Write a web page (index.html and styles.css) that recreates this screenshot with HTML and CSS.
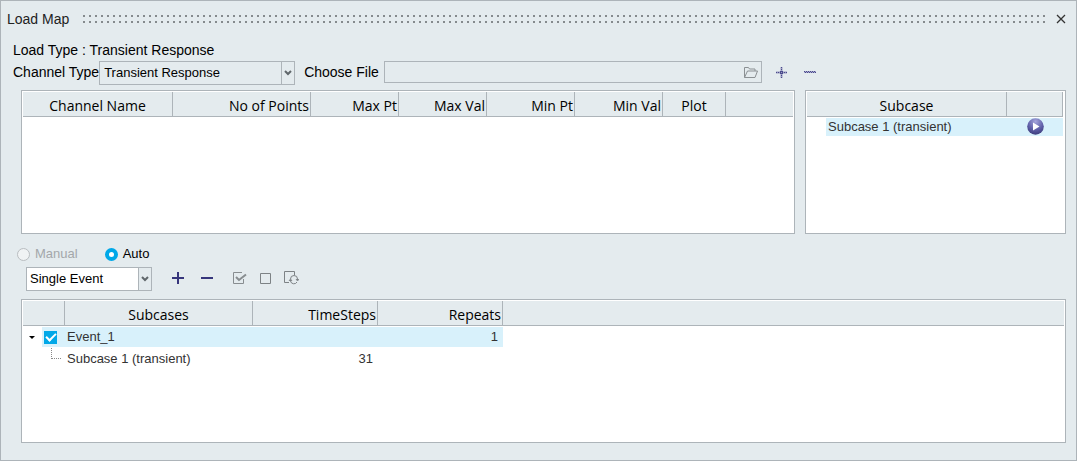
FILE: index.html
```
<!DOCTYPE html>
<html lang="en">
<head>
  <meta charset="UTF-8">
  <meta name="viewport" content="width=device-width, initial-scale=1.0">
  <title>Load Map</title>
  <link rel="stylesheet" href="styles.css">
</head>
<body>
  <main class="panel">
    <header class="title-bar">
      <h1>Load Map</h1>
      <div class="grip"></div>
      <button class="icon-btn close" type="button" aria-label="Close">
        <svg width="10" height="10" viewBox="0 0 10 10"><path d="M1 1l8 8M9 1l-8 8" stroke="#333" stroke-width="1.3"/></svg>
      </button>
    </header>

    <p class="load-type">Load Type : Transient Response</p>

    <div class="channel-row">
      <label for="channel-type">Channel Type</label>
      <span class="select channel-select">
        <select id="channel-type">
          <option>Transient Response</option>
        </select>
        <svg class="arrow" viewBox="0 0 12 22"><path d="M3 9l3 3 3-3" fill="none" stroke="#60676b" stroke-width="2"/></svg>
      </span>
      <label class="file-label" for="file">Choose File</label>
      <span class="file-box">
        <input id="file" type="text">
        <button class="icon-btn" type="button" aria-label="Browse">
          <svg width="14" height="11" viewBox="0 0 14 11" fill="none" stroke="#8b9093"><path d="M.5 10.500V.5h4l1 1.500h5.500v2M.5 10.500l3-6.500h10l-2.500 6.500z"/></svg>
        </button>
      </span>
      <button class="icon-btn add-file" type="button" aria-label="Add channel">
        <svg width="11" height="11" viewBox="0 0 11 11" stroke="#4a4a8c" fill="none"><path d="M0 5.500h11M5.500 0v11" stroke="#9a9cc0" stroke-width="2"/><path d="M0 5.500h11M5.500 0v11" stroke-dasharray="1 1"/><path d="M4 4.500h3M4 6.500h3" stroke-dasharray="1 1"/></svg>
      </button>
      <button class="icon-btn remove-file" type="button" aria-label="Remove channel">
        <svg width="12" height="2" viewBox="0 0 12 2" stroke="#4a4a8c"><path d="M0 1h12" stroke="#a9abce" stroke-width="2"/><path d="M0 .5h12" stroke-dasharray="1 1"/><path d="M1 1.500h11" stroke-dasharray="1 1"/></svg>
      </button>
    </div>

    <div class="tables">
      <div class="table-box">
        <table>
          <colgroup><col class="col-name"><col class="col-points"><col class="col-value"><col class="col-value"><col class="col-value"><col class="col-value"><col class="col-plot"><col></colgroup>
          <thead>
            <tr><th>Channel Name</th><th class="num">No of Points</th><th class="num">Max Pt</th><th class="num">Max Val</th><th class="num">Min Pt</th><th class="num">Min Val</th><th>Plot</th><th></th></tr>
          </thead>
        </table>
      </div>
      <div class="table-box subcase-box">
        <table>
          <colgroup><col><col class="col-run"></colgroup>
          <thead>
            <tr><th>Subcase</th><th></th></tr>
          </thead>
          <tbody>
            <tr>
              <td class="subcase-name"><span>Subcase 1 (transient)</span></td>
              <td class="run">
                <button class="icon-btn" type="button" aria-label="Run subcase">
                  <svg width="17" height="17" viewBox="0 0 17 17">
                    <defs><radialGradient id="ball" cx=".5" cy=".2" r=".8"><stop offset="0" stop-color="#a5a5dc"/><stop offset=".6" stop-color="#5f5fa8"/><stop offset="1" stop-color="#3c3c7c"/></radialGradient></defs>
                    <circle cx="8.500" cy="8.500" r="8.300" fill="url(#ball)"/><path d="M6 4.500l6.500 4-6.500 4z" fill="#fff"/>
                  </svg>
                </button>
              </td>
            </tr>
          </tbody>
        </table>
      </div>
    </div>

    <div class="modes">
      <label class="off"><input type="radio" name="mode" disabled>Manual</label>
      <label><input type="radio" name="mode" checked>Auto</label>
    </div>

    <div class="event-row">
      <span class="select event-select">
        <select aria-label="Event type">
          <option>Single Event</option>
        </select>
        <svg class="arrow" viewBox="0 0 12 22"><path d="M3 9l3 3 3-3" fill="none" stroke="#60676b" stroke-width="2"/></svg>
      </span>
      <div class="tools">
        <button class="icon-btn" type="button" aria-label="Add event">
          <svg width="12" height="12" viewBox="0 0 12 12"><path d="M0 6h12M6 0v12" stroke="#36367c" stroke-width="2"/></svg>
        </button>
        <button class="icon-btn" type="button" aria-label="Remove event">
          <svg width="12" height="12" viewBox="0 0 12 12"><path d="M0 6h12" stroke="#36367c" stroke-width="2"/></svg>
        </button>
      </div>
      <div class="tools checks">
        <button class="icon-btn" type="button" aria-label="Check all">
          <svg width="14" height="12" viewBox="0 0 14 12" fill="none" stroke="#888d90"><path d="M9 .5H.5v11h10V7"/><path d="M3 5l3 3 7-5.500" stroke-width="2"/></svg>
        </button>
        <button class="icon-btn" type="button" aria-label="Uncheck all">
          <svg width="11" height="11" viewBox="0 0 11 11" fill="none" stroke="#7d8285"><path d="M.5.5h10v10H.5z"/></svg>
        </button>
        <button class="icon-btn" type="button" aria-label="Reverse checks">
          <svg width="15" height="14" viewBox="0 0 15 14" fill="none" stroke="#7d8285"><path d="M5 11.500H.5V.5h10V4"/><path d="M6.500 8a3.500 3.500 0 0 1 7 0v1M13 11a3.500 3.500 0 0 1-6.500-1V9M5 10l1.500-2L8 10M12 8l1.500 2L15 8"/></svg>
        </button>
      </div>
    </div>

    <div class="table-box events-box">
      <table>
        <colgroup><col class="col-tree"><col class="col-subcases"><col class="col-steps"><col class="col-steps"><col></colgroup>
        <thead>
          <tr><th></th><th>Subcases</th><th class="num">TimeSteps</th><th class="num">Repeats</th><th></th></tr>
        </thead>
        <tbody>
          <tr class="event">
            <td class="tree">
              <div class="node">
                <button class="icon-btn" type="button" aria-label="Collapse Event_1">
                  <svg width="6" height="3" viewBox="0 0 6 3"><path d="M0 0h6L3 3z"/></svg>
                </button>
                <input id="event-1" type="checkbox" checked>
              </div>
            </td>
            <td><label for="event-1">Event_1</label></td><td></td><td class="num">1</td><td class="rest"></td>
          </tr>
          <tr class="child">
            <td class="tree"><div class="branch"></div></td>
            <td>Subcase 1 (transient)</td><td class="num">31</td><td></td><td></td>
          </tr>
        </tbody>
      </table>
    </div>
  </main>
</body>
</html>
```
FILE: styles.css
```
* {
  box-sizing: border-box;
}
body {
  margin: 0;
  font-family: "Liberation Sans", Arial, sans-serif;
  font-size: 13px;
  line-height: 16px;
  color: #000;
}
.panel {
  min-height: 100vh;
  display: flex;
  flex-direction: column;
  padding: 10px 10px 17px 6px;
  background: #e4ebee;
  border: 1px solid #adb4b9;
}
.icon-btn {
  display: flex;
  padding: 0;
  border: 0;
  background: none;
}
.title-bar {
  display: flex;
  align-items: center;
  height: 16px;
}
h1 {
  margin: 0;
  font-size: 14px;
  font-weight: normal;
  color: #222;
}
/* two rows of small square dots */
.grip {
  flex: 1;
  height: 8px;
  margin: 0 11px 0 14px;
  background:
    conic-gradient(from 270deg at 2px 2px, #858a8d 90deg, transparent 0) 0 0 / 6px 6px;
}
.load-type {
  margin: 15px 0 3px 6px;
  font-size: 14px;
}
.channel-row {
  display: flex;
  align-items: flex-start;
  height: 22px;
  padding-left: 6px;
}
.channel-row label {
  font-size: 14px;
  line-height: 22px;
}
.select {
  position: relative;
  display: flex;
  height: 24px;
}
.select select {
  width: 100%;
  padding: 0 16px 0 4px;
  appearance: none;
  border: 1px solid #adb4b9;
  border-radius: 0;
  background: #e4ebee;
  font: inherit;
  color: inherit;
}
.arrow {
  position: absolute;
  top: 1px;
  right: 1px;
  bottom: 1px;
  width: 13px;
  height: 22px;
  border-left: 1px solid #adb4b9;
  pointer-events: none;
}
.channel-select {
  width: 196px;
}
.file-label {
  margin: 0 5px 0 9px;
}
.file-box {
  display: flex;
  align-items: center;
  width: 378px;
  height: 22px;
  padding-right: 3px;
  border: 1px solid #adb4b9;
}
.file-box input {
  flex: 1;
  min-width: 0;
  height: 20px;
  border: 0;
  background: none;
  font: inherit;
}
.add-file,
.remove-file {
  align-self: center;
}
.add-file {
  margin-left: 14px;
}
.remove-file {
  margin-left: 17px;
}
.tables {
  display: flex;
  gap: 10px;
  margin: 7px 0 12px 14px;
}
.table-box {
  flex: 1;
  min-width: 0;
  height: 144px;
  padding: 1px;
  border: 1px solid #adb4b9;
  background: #fff;
}
.subcase-box {
  flex: 0 0 261px;
  padding-right: 2px;
}
table {
  width: 100%;
  table-layout: fixed;
  border-collapse: separate;
  border-spacing: 0;
}
th {
  height: 25px;
  padding: 4px 1px 0;
  border-right: 1px solid #adb4b9;
  border-bottom: 1px solid #adb4b9;
  background: #e4ebee;
  font-family: "Open Sans", "Noto Sans", sans-serif;
  font-size: 14px;
  line-height: 20px;
  font-weight: normal;
}
th:last-child {
  border-right: 0;
}
.subcase-box th:last-child {
  border-right: 1px solid #adb4b9;
}
td {
  height: 22px;
  padding: 0 2px;
  color: #333;
}
.num {
  text-align: right;
}
td.num {
  padding-right: 5px;
}
.col-name {
  width: 150px;
}
.col-points {
  width: 138px;
}
.col-value {
  width: 88px;
}
.col-plot {
  width: 63px;
}
.col-run {
  width: 56px;
}
.subcase-box td {
  height: 20px;
  padding: 1px 0;
}
.subcase-name span {
  display: block;
  margin-left: 19px;
  padding: 1px 2px;
  background: #d8f1fb;
}
.subcase-box .run {
  background: #d8f1fb content-box;
}
.run .icon-btn {
  margin: 0 auto;
  height: 18px;
}
.modes {
  display: flex;
  gap: 27px;
  margin-left: 10px;
}
.modes label {
  display: flex;
  align-items: center;
  gap: 5px;
}
.modes .off {
  color: #a3a7aa;
}
.modes input {
  width: 13px;
  height: 13px;
  margin: 0;
  appearance: none;
  border: 1px solid #b9bdc0;
  border-radius: 50%;
  background: #f0f3f4;
}
.modes input:checked {
  border: 4px solid #00a8e8;
  background: #fff;
}
.event-row {
  display: flex;
  align-items: center;
  margin: 5px 0 8px 19px;
}
.event-select {
  width: 126px;
}
.event-select select {
  padding-left: 3px;
  background: #fff;
}
.event-select .arrow {
  background: #e4ebee;
}
.tools {
  display: flex;
  align-items: center;
  gap: 17px;
  margin: 0 0 2px 20px;
}
.checks {
  gap: 13px;
}
.events-box {
  margin-left: 14px;
}
.events-box tbody::before {
  content: "";
  display: block;
  height: 1px;
}
.event td {
  height: 20px;
  background: #d8f1fb;
}
.child td {
  height: 24px;
}
.col-tree {
  width: 42px;
}
.col-subcases {
  width: 188px;
}
.col-steps {
  width: 125px;
}
.event .rest {
  background: none;
}
/* the highlight starts just left of the tick box */
.events-box .tree {
  padding: 0;
  background: none;
}
.event .tree {
  background: linear-gradient(#d8f1fb, #d8f1fb) 19px 0 no-repeat;
}
.node {
  display: flex;
  align-items: center;
  gap: 9px;
  padding-left: 6px;
}
.node input {
  display: grid;
  place-items: center;
  appearance: none;
  width: 13px;
  height: 13px;
  margin: 0;
  background: #00a8e8;
}
.node input:checked::before {
  content: "";
  width: 8px;
  height: 4px;
  margin-bottom: 2px;
  border: solid #fff;
  border-width: 0 0 2px 2px;
  transform: rotate(-45deg);
}
.branch {
  width: 10px;
  height: 11px;
  margin: 0 0 12px 28px;
  border: dotted #888;
  border-width: 0 0 1px 1px;
}
```
